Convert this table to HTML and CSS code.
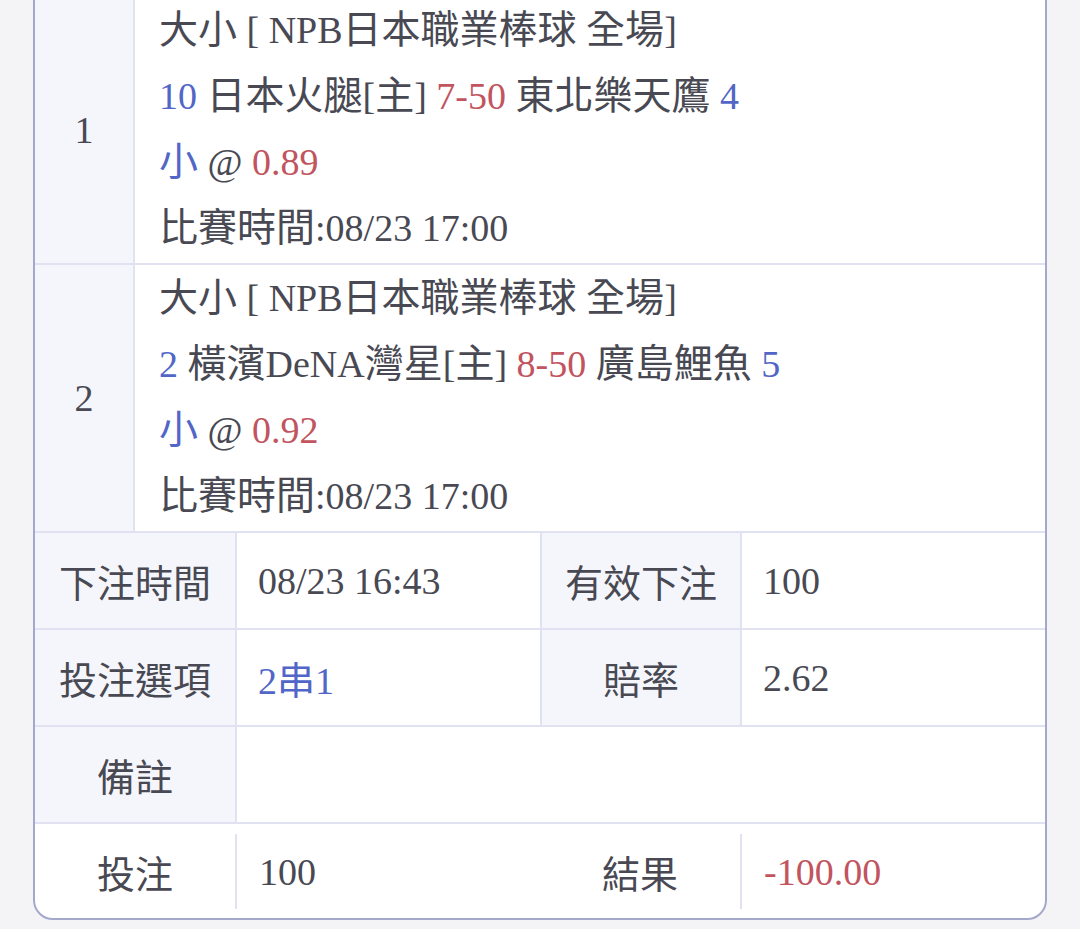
FILE: index.html
```html
<!DOCTYPE html>
<html lang="zh-Hant">
<head>
<meta charset="utf-8">
<title>注單詳情</title>
<link rel="stylesheet" href="styles.css">
</head>
<body>
<div class="page">
  <div class="card">
    <div class="match">
      <div class="match-no">1</div>
      <div class="match-info">
        <div class="line"><span class="c">大小</span> [ NPB<span class="c">日本職業棒球</span> <span class="c">全場</span>]</div>
        <div class="line"><span class="blue">10</span> <span class="c">日本火腿</span>[<span class="c">主</span>] <span class="red">7-50</span> <span class="c">東北樂天鷹</span> <span class="blue">4</span></div>
        <div class="line"><span class="blue c">小</span> @ <span class="red">0.89</span></div>
        <div class="line"><span class="c">比賽時間</span>:08/23 17:00</div>
      </div>
    </div>
    <div class="match">
      <div class="match-no">2</div>
      <div class="match-info">
        <div class="line"><span class="c">大小</span> [ NPB<span class="c">日本職業棒球</span> <span class="c">全場</span>]</div>
        <div class="line"><span class="blue">2</span> <span class="c">橫濱</span>DeNA<span class="c">灣星</span>[<span class="c">主</span>] <span class="red">8-50</span> <span class="c">廣島鯉魚</span> <span class="blue">5</span></div>
        <div class="line"><span class="blue c">小</span> @ <span class="red">0.92</span></div>
        <div class="line"><span class="c">比賽時間</span>:08/23 17:00</div>
      </div>
    </div>
    <div class="details">
      <div class="label">下注時間</div>
      <div class="value">08/23 16:43</div>
      <div class="label">有效下注</div>
      <div class="value last">100</div>

      <div class="label">投注選項</div>
      <div class="value blue">2串1</div>
      <div class="label">賠率</div>
      <div class="value last">2.62</div>

      <div class="label">備註</div>
      <div class="value wide"></div>
    </div>
    <div class="final">
      <div class="f-label">投注</div>
      <div class="f-value">100</div>
      <div class="f-label">結果</div>
      <div class="f-value red">-100.00</div>
    </div>
  </div>
</div>
</body>
</html>
```

FILE: styles.css
```css
html, body {
  margin: 0;
  padding: 0;
  background: #f4f4f6;
}

body {
  font-family: "Liberation Serif", "Noto Sans CJK TC", serif;
  font-size: 38px;
  color: #484953;
}

.page {
  padding: 0 33px;
  min-height: 100vh;
  box-sizing: border-box;
}

.card {
  margin-top: -5px;
  background: #ffffff;
  border: 2px solid #a4a8cc;
  border-radius: 0 0 20px 20px;
  overflow: hidden;
}

.blue { color: #5166c6; }
.red { color: #c1545e; }

.c { font-size: 39px; }

.match {
  display: flex;
  border-bottom: 2px solid #e0e1f1;
}

.match-no {
  width: 98px;
  flex: none;
  background: #f5f6fb;
  border-right: 2px solid #e0e1f1;
  display: flex;
  align-items: center;
  justify-content: center;
}

.match-info {
  flex: 1;
  padding: 0 0 2px 24px;
}

.line {
  height: 66px;
  line-height: 66px;
  white-space: nowrap;
}

.details {
  display: grid;
  grid-template-columns: 202px 305px 200px 1fr;
}

.label,
.value {
  height: 95px;
  display: flex;
  align-items: center;
  border-bottom: 2px solid #e0e1f1;
  border-right: 2px solid #e0e1f1;
}

.label {
  justify-content: center;
  background: #f5f6fb;
}

.value {
  padding-left: 21px;
}

.value.last,
.value.wide {
  border-right: none;
}

.value.wide {
  grid-column: 2 / 5;
}

.final {
  display: grid;
  grid-template-columns: 200px 305px 200px 1fr;
  height: 94px;
}

.f-label {
  display: flex;
  align-items: center;
  justify-content: center;
}

.f-value {
  display: flex;
  align-items: center;
  margin: 10px 0 9px;
  padding-left: 22px;
  border-left: 2px solid #e0e1f1;
}
```
